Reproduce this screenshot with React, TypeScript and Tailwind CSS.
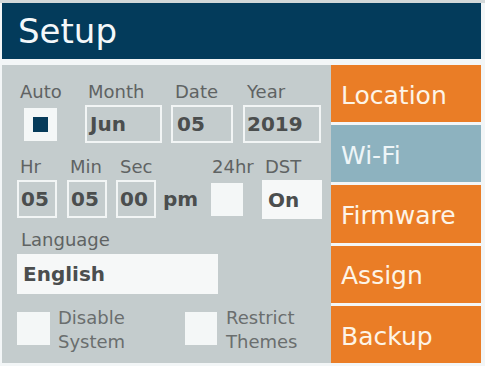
const font = { fontFamily: '"DejaVu Sans", "Liberation Sans", sans-serif' };

function Label({ children, className = "" }: { children: React.ReactNode; className?: string }) {
  return <div className={`h-[22px] text-[18px] leading-[22px] text-[#5f6363] whitespace-nowrap ${className}`}>{children}</div>;
}

function Field({ value, className = "" }: { value: string; className?: string }) {
  return (
    <div className={`h-[38px] border-2 border-[#f2f5f5] flex items-center pl-[2px] text-[20px] font-bold text-[#4b4e4e] ${className}`}>
      {value}
    </div>
  );
}

const menu = [
  { name: "Location", active: false },
  { name: "Wi-Fi", active: true },
  { name: "Firmware", active: false },
  { name: "Assign", active: false },
  { name: "Backup", active: false },
];

export default function App() {
  return (
    <div className="w-[485px] h-[366px] bg-[#f3f6f7] border-t-[3px] border-[#d3d8d9] pl-[2px] overflow-hidden" style={font}>
      <div className="w-[479px] h-[56px] bg-[#033b5b] flex items-center pl-[16px] text-[34px] text-[#f4f8fa]">
        Setup
      </div>

      <div className="flex mt-[6px] h-[298px] w-[479px]">
        {/* left panel */}
        <div className="w-[329px] bg-[#c4cccd] pl-[15px] pt-[16px]">
          <div className="flex">
            <div className="w-[68px]">
              <Label className="pl-[3px]">Auto</Label>
              <div className="ml-[7px] mt-[5px] w-[33px] h-[33px] bg-[#f4f7f7] flex items-center justify-center">
                <div className="w-[15px] h-[15px] bg-[#063b5a]" />
              </div>
            </div>
            <div className="w-[77px] mr-[9px]">
              <Label className="pl-[3px]">Month</Label>
              <Field value="Jun" className="mt-[2px] pl-[3px]" />
            </div>
            <div className="w-[62px] mr-[10px]">
              <Label className="pl-[4px]">Date</Label>
              <Field value="05" className="mt-[2px] pl-[4px]" />
            </div>
            <div className="w-[78px]">
              <Label className="pl-[4px]">Year</Label>
              <Field value="2019" className="mt-[2px]" />
            </div>
          </div>

          <div className="flex mt-[13px]">
            <div className="w-[40px] mr-[10px]">
              <Label className="pl-[3px]">Hr</Label>
              <Field value="05" className="mt-[2px]" />
            </div>
            <div className="w-[40px] mr-[9px]">
              <Label className="pl-[3px]">Min</Label>
              <Field value="05" className="mt-[2px]" />
            </div>
            <div className="w-[40px] mr-[7px]">
              <Label className="pl-[4px]">Sec</Label>
              <Field value="00" className="mt-[2px]" />
            </div>
            <div className="w-[48px]">
              <Label> </Label>
              <div className="mt-[2px] h-[38px] flex items-center text-[20px] font-bold text-[#4b4e4e]">pm</div>
            </div>
            <div className="w-[51px]">
              <Label className="pl-[1px]">24hr</Label>
              <div className="mt-[5px] w-[32px] h-[33px] bg-[#f4f7f7]" />
            </div>
            <div className="w-[60px]">
              <Label className="pl-[3px]">DST</Label>
              <div className="mt-[2px] h-[39px] bg-[#f6f8f8] flex items-center pl-[6px] text-[20px] font-bold text-[#4b4e4e]">On</div>
            </div>
          </div>

          <Label className="mt-[10px] pl-[4px]">Language</Label>
          <div className="mt-[3px] w-[201px] h-[40px] bg-[#f6f8f8] flex items-center pl-[6px] text-[20px] font-bold text-[#4b4e4e]">
            English
          </div>

          <div className="flex items-start mt-[12px]">
            <div className="mt-[6px] w-[33px] h-[33px] bg-[#f4f7f7]" />
            <div className="ml-[8px] w-[127px] text-[18px] leading-[24px] text-[#6a6e6e]">
              Disable<br />System
            </div>
            <div className="mt-[6px] w-[32px] h-[33px] bg-[#f4f7f7]" />
            <div className="ml-[9px] text-[18px] leading-[24px] text-[#6a6e6e]">
              Restrict<br />Themes
            </div>
          </div>
        </div>

        {/* right menu */}
        <div className="w-[150px] flex flex-col gap-[3px]">
          {menu.map((m) => (
            <div
              key={m.name}
              className={`flex-1 flex items-center pl-[10px] pt-[4px] text-[25px] ${m.active ? "bg-[#8db2bf] text-[#eef5f7]" : "bg-[#ea7d26] text-[#fdf4e6]"}`}
            >
              {m.name}
            </div>
          ))}
        </div>
      </div>
    </div>
  );
}
